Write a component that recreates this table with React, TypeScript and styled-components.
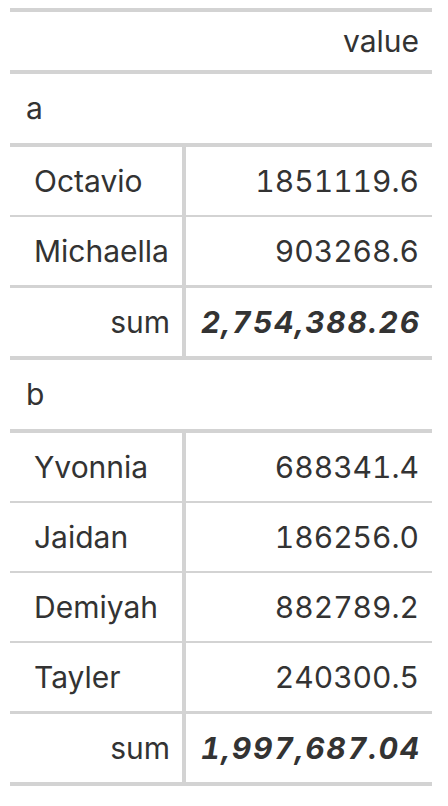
import React from "react";
import styled, { createGlobalStyle } from "styled-components";

const Global = createGlobalStyle`
  html, body { margin: 0; padding: 0; background: #ffffff; }
  body { font-family: Inter, Roboto, "Liberation Sans", sans-serif; }
`;

const Page = styled.div`
  padding: 8px 16px 20px 10px;
`;

const Table = styled.table`
  width: 422px;
  border-collapse: collapse;
  border-top: 4px solid #d3d3d3;
  border-bottom: 4px solid #d3d3d3;
  color: #333333;
  font-family: Inter, Roboto, "Liberation Sans", sans-serif;
  font-size: 30px;
  line-height: 36px;
  table-layout: fixed;
`;

const HeadCell = styled.th<{ $right?: boolean }>`
  font-weight: 400;
  text-align: ${(p) => (p.$right ? "right" : "left")};
  padding: 11px 13px 11px 16px;
  border-bottom: 4px solid #d3d3d3;
`;

const GroupCell = styled.td<{ $first?: boolean }>`
  padding: 16px 16px 17px 16px;
  border-top: ${(p) => (p.$first ? "none" : "4px solid #d3d3d3")};
  border-bottom: 4px solid #d3d3d3;
  text-align: left;
`;

const StubCell = styled.td<{ $sum?: boolean; $top: number }>`
  padding: 16px 12px 16px 24px;
  text-align: ${(p) => (p.$sum ? "right" : "left")};
  border-right: 4px solid #d3d3d3;
  border-top: ${(p) => p.$top}px solid #d3d3d3;
  white-space: nowrap;
`;

const ValueCell = styled.td<{ $sum?: boolean; $top: number }>`
  padding: 16px ${(p) => (p.$sum ? "11px" : "13px")} 16px 12px;
  text-align: right;
  border-top: ${(p) => p.$top}px solid #d3d3d3;
  font-weight: ${(p) => (p.$sum ? 700 : 400)};
  font-style: ${(p) => (p.$sum ? "italic" : "normal")};
  letter-spacing: ${(p) => (p.$sum ? "1.8px" : "0")};
  font-variant-numeric: tabular-nums;
  white-space: nowrap;
`;

type Group = { name: string; rows: [string, string][]; sum: string };

const groups: Group[] = [
  {
    name: "a",
    rows: [
      ["Octavio", "1851119.6"],
      ["Michaella", "903268.6"],
    ],
    sum: "2,754,388.26",
  },
  {
    name: "b",
    rows: [
      ["Yvonnia", "688341.4"],
      ["Jaidan", "186256.0"],
      ["Demiyah", "882789.2"],
      ["Tayler", "240300.5"],
    ],
    sum: "1,997,687.04",
  },
];

export default function App() {
  return (
    <>
      <Global />
      <Page>
        <Table>
          <colgroup>
            <col style={{ width: 174 }} />
            <col style={{ width: 248 }} />
          </colgroup>
          <thead>
            <tr>
              <HeadCell />
              <HeadCell $right>value</HeadCell>
            </tr>
          </thead>
          {groups.map((g, gi) => (
            <tbody key={g.name}>
              <tr>
                <GroupCell colSpan={2} $first={gi === 0}>
                  {g.name}
                </GroupCell>
              </tr>
              {g.rows.map(([n, v], i) => (
                <tr key={n}>
                  <StubCell $top={i === 0 ? 0 : 2}>{n}</StubCell>
                  <ValueCell $top={i === 0 ? 0 : 2}>{v}</ValueCell>
                </tr>
              ))}
              <tr>
                <StubCell $sum $top={3}>sum</StubCell>
                <ValueCell $sum $top={3}>{g.sum}</ValueCell>
              </tr>
            </tbody>
          ))}
        </Table>
      </Page>
    </>
  );
}
